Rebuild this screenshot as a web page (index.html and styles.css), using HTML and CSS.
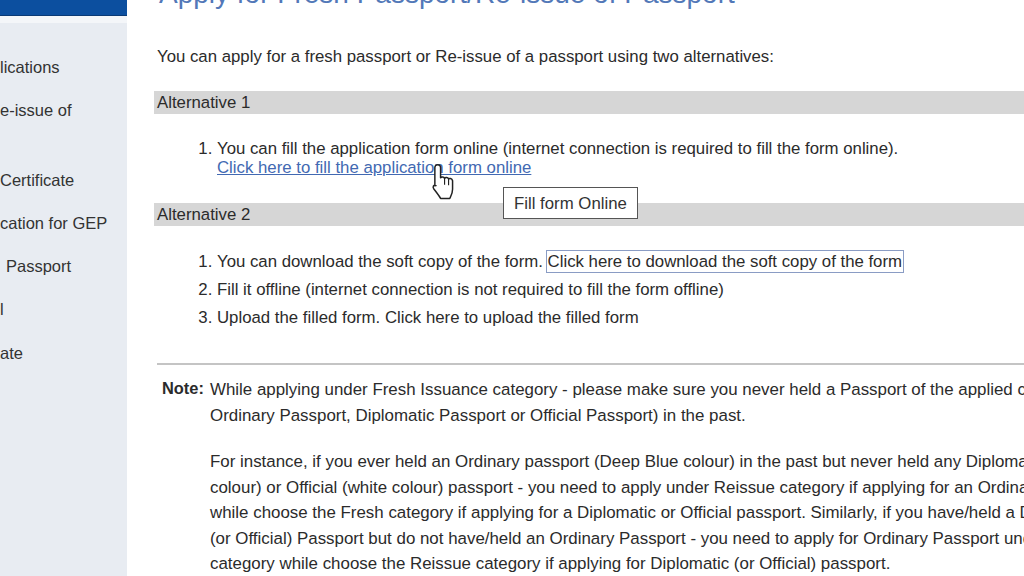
FILE: index.html
```html
<!DOCTYPE html>
<html>
<head>
<meta charset="utf-8">
<link rel="stylesheet" href="styles.css">
</head>
<body>
<div class="page">
  <aside class="sidebar">
    <div class="side-top"></div>
    <ul class="side-list">
      <li class="s1">lications</li>
      <li class="s2">e-issue of</li>
      <li class="s3">Certificate</li>
      <li class="s4">cation for GEP</li>
      <li class="s5 ind6">Passport</li>
      <li class="s6">l</li>
      <li class="s7">ate</li>
    </ul>
  </aside>
  <main class="main">
    <h1 class="title">Apply for Fresh Passport/Re-issue of Passport</h1>
    <p class="intro">You can apply for a fresh passport or Re-issue of a passport using two alternatives:</p>
    <div class="alt-bar">Alternative 1</div>
    <ol class="list1">
      <li>You can fill the application form online (internet connection is required to fill the form online).<br><a class="link" href="#">Click here to fill the application form online</a></li>
    </ol>
    <div class="alt-bar">Alternative 2</div>
    <ol class="list2">
      <li>You can download the soft copy of the form. <span class="focus">Click here to download the soft copy of the form</span></li>
      <li>Fill it offline (internet connection is not required to fill the form offline)</li>
      <li>Upload the filled form. Click here to upload the filled form</li>
    </ol>
    <hr class="rule">
    <div class="note">
      <div class="note-label">Note:</div>
      <div class="note-body">
        <p class="np"><span>While applying under Fresh Issuance category - please make sure you never held a Passport of the applied category (i.e.</span><span>Ordinary Passport, Diplomatic Passport or Official Passport) in the past.</span></p>
        <p class="np"><span>For instance, if you ever held an Ordinary passport (Deep Blue colour) in the past but never held any Diplomatic (Maroon</span><span>colour) or Official (white colour) passport - you need to apply under Reissue category if applying for an Ordinary passport</span><span>while choose the Fresh category if applying for a Diplomatic or Official passport. Similarly, if you have/held a Diplomatic</span><span>(or Official) Passport but do not have/held an Ordinary Passport - you need to apply for Ordinary Passport under Fresh</span><span>category while choose the Reissue category if applying for Diplomatic (or Official) passport.</span></p>
      </div>
    </div>
  </main>
</div>
<div class="tooltip">Fill form Online</div>
<svg class="cursor" width="28" height="40" viewBox="0 0 24 35">
  <path d="M6.5 1.5 C8 1.5 9 2.5 9 4 L9 13 C9.5 11.8 12 11.8 12.5 13.5 C13 12.3 15.5 12.3 16 14 C16.5 13.2 19 13.3 19.5 15.5 L19.5 23 C19.5 27 18 29 17 31 L9 31 C8 29 6 26.5 3 22.5 C1.8 20.8 3 18.6 5 19.8 L4 20 L4 4 C4 2.5 5 1.5 6.5 1.5 Z" fill="#fff" stroke="#222" stroke-width="1.3" stroke-linejoin="round"/>
  <path d="M12.5 13.5 L12.5 19 M16 14 L16 19.5" fill="none" stroke="#222" stroke-width="1"/>
</svg>
</body>
</html>
```
FILE: styles.css
```css
html, body {
  margin: 0;
  padding: 0;
  overflow: hidden;
  background: #fff;
}
body {
  width: 1024px;
  height: 576px;
  position: relative;
  font-family: "Liberation Sans", Arial, sans-serif;
  color: #2b2b2b;
  font-size: 16.8px;
}
.page {
  display: flex;
  height: 576px;
}
.sidebar {
  width: 127px;
  flex: 0 0 127px;
  background: #e8ecf2;
  display: flex;
  flex-direction: column;
}
.side-top {
  height: 15px;
  background: #0c4f9f;
  border-bottom: 1px solid #0a3a75;
  margin-bottom: 7px;
  box-shadow: 0 7px 0 #f4f6f9;
}
.side-list {
  list-style: none;
  margin: 0;
  padding: 0;
  font-size: 16.5px;
  line-height: 18px;
  color: #333;
  white-space: nowrap;
}
.side-list li { margin: 0; }
.s1 { margin-top: 35px !important; }
.s2 { margin-top: 25px !important; }
.s3 { margin-top: 52px !important; }
.s4 { margin-top: 25px !important; }
.s5 { margin-top: 25px !important; }
.s6 { margin-top: 25px !important; }
.s7 { margin-top: 26px !important; }
.ind6 { padding-left: 6px; }

.main {
  flex: 1 1 auto;
  min-width: 0;
  padding-left: 27px;
  overflow: hidden;
}
.title {
  margin: -21px 0 0 5px;
  font-size: 28px;
  line-height: 30px;
  font-weight: normal;
  color: #5278b8;
  white-space: nowrap;
}
.intro {
  margin: 38px 0 0 3px;
  line-height: 20px;
  white-space: nowrap;
}
.alt-bar {
  margin-top: 24px;
  height: 23px;
  line-height: 23px;
  background: #d6d6d6;
  padding-left: 3px;
  width: 1000px;
}
.list1 {
  margin: 25px 0 0;
  padding-left: 63px;
  line-height: 19px;
  white-space: nowrap;
}
.list1 + .alt-bar { margin-top: 26px; }
.link {
  color: #4269b2;
  text-decoration: underline;
}
.list2 {
  margin: 22px 0 0;
  padding-left: 63px;
  line-height: 28px;
  white-space: nowrap;
}
.focus {
  outline: 1px solid #8a9cc4;
  outline-offset: 1px;
}
.rule {
  margin: 31px 0 0 3px;
  height: 0;
  border: 0;
  border-top: 2px solid #c4c4c4;
  width: 1000px;
}
.note {
  display: flex;
  margin: 12px 0 0 8px;
  line-height: 25.5px;
}
.note-label {
  font-weight: bold;
  flex: 0 0 48px;
  line-height: 23px;
  font-size: 16.4px;
}
.note-body {
  white-space: nowrap;
  font-size: 16.9px;
}
.np {
  margin: 0;
}
.np + .np { margin-top: 21px; }
.np span { display: block; }

.tooltip {
  position: absolute;
  left: 503px;
  top: 187px;
  width: 135px;
  height: 32px;
  box-sizing: border-box;
  border: 1px solid #555;
  background: #fff;
  padding-left: 10px;
  line-height: 32px;
  font-size: 16.8px;
  color: #333;
}
.cursor {
  position: absolute;
  left: 430px;
  top: 163px;
}
```
